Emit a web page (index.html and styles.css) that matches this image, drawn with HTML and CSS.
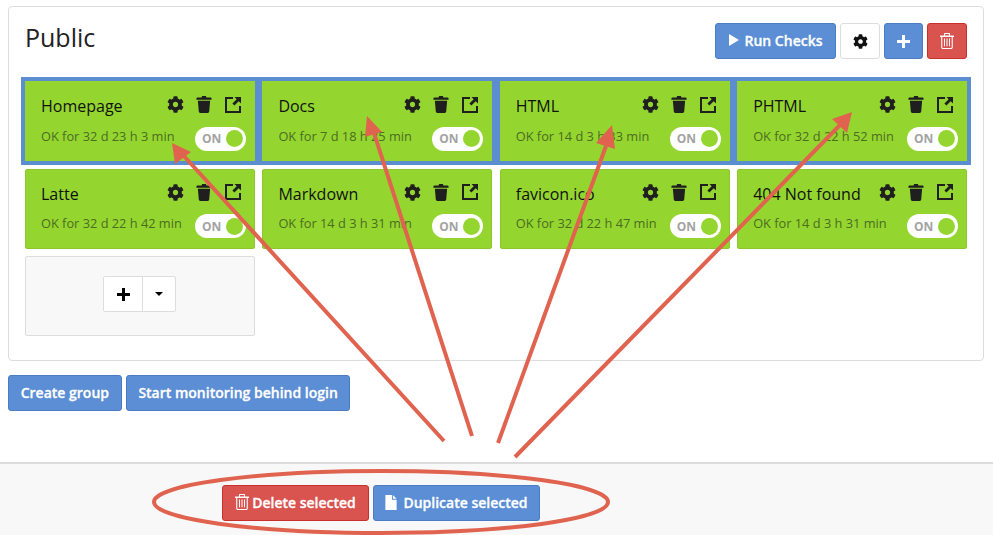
FILE: index.html
```html
<!DOCTYPE html>
<html>
<head>
    <title>Public checks</title>
    <link rel="stylesheet" href="styles.css">
</head>
<body>
    <svg class="icon-defs" width="0" height="0">
        <symbol id="i-gear" viewBox="0 0 512 512">
            <path d="M487.4 315.7l-42.6-24.6c4.3-23.2 4.3-47 0-70.2l42.6-24.6c4.9-2.8 7.1-8.6 5.5-14-11.1-35.6-30-67.8-54.7-94.6-3.8-4.1-10-5.1-14.8-2.3L380.8 110c-17.9-15.4-38.5-27.3-60.8-35.1V25.8c0-5.6-3.9-10.5-9.4-11.7-36.7-8.2-74.3-7.8-109.2 0-5.5 1.2-9.4 6.1-9.4 11.7V75c-22.2 7.9-42.8 19.8-60.8 35.1L88.7 85.5c-4.9-2.8-11-1.9-14.8 2.3-24.7 26.7-43.6 58.9-54.7 94.6-1.7 5.4.6 11.2 5.5 14L67.3 221c-4.3 23.2-4.3 47 0 70.2l-42.6 24.6c-4.9 2.8-7.1 8.6-5.5 14 11.1 35.6 30 67.8 54.7 94.6 3.8 4.1 10 5.1 14.8 2.3l42.6-24.6c17.9 15.4 38.5 27.3 60.8 35.1v49.2c0 5.6 3.9 10.5 9.4 11.7 36.7 8.2 74.3 7.8 109.2 0 5.5-1.2 9.4-6.1 9.4-11.7v-49.2c22.2-7.9 42.8-19.8 60.8-35.1l42.6 24.6c4.9 2.8 11 1.9 14.8-2.3 24.7-26.7 43.6-58.9 54.7-94.6 1.5-5.5-.7-11.3-5.6-14.1zM256 336c-44.1 0-80-35.9-80-80s35.9-80 80-80 80 35.9 80 80-35.9 80-80 80z"/>
        </symbol>
        <symbol id="i-bin" viewBox="0 0 16 18">
            <path d="M6 0h4l.6 1.500H15c.6 0 1 .4 1 1V4H0V2.500c0-.6.4-1 1-1h4.400z"/>
            <path d="M1.500 5h13l-1 11.500c-.1.900-.7 1.500-1.600 1.500H4.100c-.9 0-1.500-.6-1.600-1.500z"/>
        </symbol>
        <symbol id="i-open" viewBox="0 0 16 16">
            <path d="M0 0h8v2H2v12h12V9h2v7H0z"/>
            <path d="M9.500 0H16v6.500l-2.300-2.300-4.300 4.300-2-2 4.300-4.300z"/>
        </symbol>
        <symbol id="i-trash-line" viewBox="0 0 14 16">
            <path fill-rule="evenodd" d="M5 0h4c.6 0 1 .4 1 1v1.500h3.500c.3 0 .5.200.5.500v1h-1.200v10.200c0 1-.7 1.800-1.600 1.800H2.800c-.9 0-1.600-.8-1.600-1.800V4H0V3c0-.3.200-.5.500-.5H4V1c0-.6.400-1 1-1zm0 1v1.500h4V1zM2.300 4v10.200c0 .5.300.7.500.7h8.400c.2 0 .5-.2.500-.7V4zM4 5.500h1v7.800H4zm2.500 0h1v7.800h-1zm2.500 0h1v7.800H9z"/>
        </symbol>
        <symbol id="i-file" viewBox="0 0 12 16">
            <path d="M0 0h7v5h5v11H0zM8 0l4 4H8z"/>
        </symbol>
    </svg>

    <div class="page">
        <div class="panel">
            <div class="panel-head">
                <h2>Public</h2>
                <div class="head-btns">
                    <button class="btn btn-blue btn-run"><span class="play"></span>Run Checks</button>
                    <button class="btn btn-white btn-square"><svg class="ico-15"><use href="#i-gear"/></svg></button>
                    <button class="btn btn-blue btn-square btn-add"><span class="plus plus-white"></span></button>
                    <button class="btn btn-red btn-square"><svg class="ico-trash"><use href="#i-trash-line"/></svg></button>
                </div>
            </div>

            <div class="grid">
                <div class="card selected">
                    <div class="card-top"><span class="name">Homepage</span><span class="tools"><svg class="t-gear"><use href="#i-gear"/></svg><svg class="t-bin"><use href="#i-bin"/></svg><svg class="t-open"><use href="#i-open"/></svg></span></div>
                    <div class="card-bottom"><span class="status">OK for 32 d 23 h 3 min</span><span class="toggle">ON<i></i></span></div>
                </div>
                <div class="card selected">
                    <div class="card-top"><span class="name">Docs</span><span class="tools"><svg class="t-gear"><use href="#i-gear"/></svg><svg class="t-bin"><use href="#i-bin"/></svg><svg class="t-open"><use href="#i-open"/></svg></span></div>
                    <div class="card-bottom"><span class="status">OK for 7 d 18 h 25 min</span><span class="toggle">ON<i></i></span></div>
                </div>
                <div class="card selected">
                    <div class="card-top"><span class="name">HTML</span><span class="tools"><svg class="t-gear"><use href="#i-gear"/></svg><svg class="t-bin"><use href="#i-bin"/></svg><svg class="t-open"><use href="#i-open"/></svg></span></div>
                    <div class="card-bottom"><span class="status">OK for 14 d 3 h 33 min</span><span class="toggle">ON<i></i></span></div>
                </div>
                <div class="card selected">
                    <div class="card-top"><span class="name">PHTML</span><span class="tools"><svg class="t-gear"><use href="#i-gear"/></svg><svg class="t-bin"><use href="#i-bin"/></svg><svg class="t-open"><use href="#i-open"/></svg></span></div>
                    <div class="card-bottom"><span class="status">OK for 32 d 22 h 52 min</span><span class="toggle">ON<i></i></span></div>
                </div>
                <div class="card">
                    <div class="card-top"><span class="name">Latte</span><span class="tools"><svg class="t-gear"><use href="#i-gear"/></svg><svg class="t-bin"><use href="#i-bin"/></svg><svg class="t-open"><use href="#i-open"/></svg></span></div>
                    <div class="card-bottom"><span class="status">OK for 32 d 22 h 42 min</span><span class="toggle">ON<i></i></span></div>
                </div>
                <div class="card">
                    <div class="card-top"><span class="name">Markdown</span><span class="tools"><svg class="t-gear"><use href="#i-gear"/></svg><svg class="t-bin"><use href="#i-bin"/></svg><svg class="t-open"><use href="#i-open"/></svg></span></div>
                    <div class="card-bottom"><span class="status">OK for 14 d 3 h 31 min</span><span class="toggle">ON<i></i></span></div>
                </div>
                <div class="card">
                    <div class="card-top"><span class="name">favicon.ico</span><span class="tools"><svg class="t-gear"><use href="#i-gear"/></svg><svg class="t-bin"><use href="#i-bin"/></svg><svg class="t-open"><use href="#i-open"/></svg></span></div>
                    <div class="card-bottom"><span class="status">OK for 32 d 22 h 47 min</span><span class="toggle">ON<i></i></span></div>
                </div>
                <div class="card">
                    <div class="card-top"><span class="name">404 Not found</span><span class="tools"><svg class="t-gear"><use href="#i-gear"/></svg><svg class="t-bin"><use href="#i-bin"/></svg><svg class="t-open"><use href="#i-open"/></svg></span></div>
                    <div class="card-bottom"><span class="status">OK for 14 d 3 h 31 min</span><span class="toggle">ON<i></i></span></div>
                </div>
                <div class="add-card">
                    <div class="split">
                        <button class="split-main"><span class="plus plus-black"></span></button>
                        <button class="split-caret"><span class="caret"></span></button>
                    </div>
                </div>
            </div>
        </div>

        <div class="actions">
            <button class="btn btn-blue btn-text">Create group</button>
            <button class="btn btn-blue btn-text">Start monitoring behind login</button>
        </div>
    </div>

    <div class="footer">
        <button class="btn btn-red btn-delete"><svg class="ico-trash"><use href="#i-trash-line"/></svg>Delete selected</button>
        <button class="btn btn-blue btn-duplicate"><svg class="ico-file"><use href="#i-file"/></svg>Duplicate selected</button>
    </div>

    <!-- red annotations drawn on top of the screenshot -->
    <svg class="notes" width="993" height="535" viewBox="0 0 993 535">
        <g stroke="#e0634f" stroke-width="4" fill="none">
            <line x1="444" y1="441" x2="183" y2="155"/>
            <line x1="472" y1="436" x2="373" y2="130"/>
            <line x1="498" y1="443" x2="606" y2="146"/>
            <line x1="515" y1="457" x2="840" y2="125"/>
            <ellipse cx="381" cy="502" rx="227" ry="31"/>
        </g>
        <g fill="#e0634f">
            <polygon points="172,143 191,152 175,164"/>
            <polygon points="367,116 382,132 365,137"/>
            <polygon points="612,125 615,149 596,143"/>
            <polygon points="852,112 847,133 832,119"/>
        </g>
    </svg>
</body>
</html>
```

FILE: styles.css
```css
* {
    box-sizing: border-box;
}

html, body {
    height: 100%;
}

body {
    margin: 0;
    height: 535px;
    overflow: hidden;
    display: flex;
    flex-direction: column;
    font-family: "Open Sans", sans-serif;
    background-color: #fff;
    color: #222;
}

.icon-defs {
    display: block;
    height: 0;
}

.page {
    padding: 6px 9px 0 8px;
}

.panel {
    height: 355px;
    padding: 16px 16px 0 16px;
    background-color: #fff;
    border: 1px solid #ddd;
    border-radius: 4px;
}

.panel-head {
    display: flex;
    justify-content: space-between;
    height: 58px;
}

.panel-head h2 {
    margin: -1px 0 0;
    font-size: 25px;
    font-weight: 500;
    line-height: 30px;
    color: #222;
}

.head-btns {
    display: flex;
    gap: 4px;
}

.btn {
    height: 36px;
    border: 1px solid;
    border-radius: 3px;
    font-family: "Open Sans", sans-serif;
    font-size: 14px;
    font-weight: 600;
    -webkit-text-stroke: 0.3px currentColor;
    color: #fff;
    padding: 0 0 2px;
    display: inline-flex;
    align-items: center;
    justify-content: center;
}

.btn-blue {
    background-color: #5b8ed4;
    border-color: #4a7cc5;
}

.btn-red {
    background-color: #d9534f;
    border-color: #c9302c;
}

.btn-white {
    background-color: #fff;
    border-color: #ddd;
    color: #111;
}

.btn-run {
    width: 121px;
    gap: 6px;
}

.btn-square {
    width: 40px;
    padding: 0;
}

.btn-add {
    width: 39px;
}

.btn-text {
    padding: 0 11.7px 2px;
}

.play {
    width: 0;
    height: 0;
    border-left: 10px solid #fff;
    border-top: 6px solid transparent;
    border-bottom: 6px solid transparent;
}

.plus {
    display: block;
    width: 13px;
    height: 13px;
}

.plus-white {
    background: linear-gradient(#fff, #fff) center / 13px 3px no-repeat,
                linear-gradient(#fff, #fff) center / 3px 13px no-repeat;
}

.plus-black {
    background: linear-gradient(#000, #000) center / 13px 3px no-repeat,
                linear-gradient(#000, #000) center / 3px 13px no-repeat;
}

.ico-15 {
    width: 15px;
    height: 15px;
    fill: currentColor;
}

.ico-trash {
    width: 14px;
    height: 16px;
    fill: currentColor;
    stroke: none;
}

.ico-file {
    width: 12px;
    height: 15px;
    fill: currentColor;
}

.grid {
    display: grid;
    grid-template-columns: repeat(4, 1fr);
    grid-auto-rows: 80px;
    column-gap: 7.5px;
    row-gap: 7.6px;
}

.card {
    padding: 13px 8px 0 15px;
    background-color: #94d62f;
    border: 1px solid #8cc82c;
    border-radius: 2px;
}

.card.selected {
    border-color: #94d62f;
    border-radius: 0;
    outline: 4px solid #5b8ed1;
}

.card-top {
    display: flex;
    justify-content: space-between;
    align-items: center;
    height: 22px;
    padding-right: 5px;
}

.name {
    font-size: 16px;
    color: #111;
}

.tools {
    display: flex;
    align-items: center;
    margin-top: -3px;
    fill: #1f1f1f;
}

.t-gear {
    width: 17px;
    height: 17px;
    margin-right: 12px;
}

.t-bin {
    width: 16px;
    height: 17px;
    margin-right: 13px;
}

.t-open {
    width: 16px;
    height: 16px;
}

.card-bottom {
    display: flex;
    justify-content: space-between;
    align-items: center;
    height: 24px;
    margin-top: 9px;
}

.status {
    font-size: 12.8px;
    color: #4c6c22;
    margin-top: -5px;
    white-space: nowrap;
}

.toggle {
    display: flex;
    align-items: center;
    justify-content: space-between;
    width: 51px;
    height: 24px;
    margin-top: 1px;
    padding: 0 3px 0 7px;
    background-color: #fff;
    border-radius: 12px;
    font-size: 12px;
    font-weight: 700;
    color: #a3a3a3;
}

.toggle i {
    display: block;
    width: 17px;
    height: 17px;
    border-radius: 50%;
    background-color: #94d62f;
}

.add-card {
    display: flex;
    align-items: center;
    justify-content: center;
    padding-bottom: 4px;
    background-color: #f8f8f8;
    border: 1px solid #ddd;
    border-radius: 2px;
}

.split {
    display: flex;
}

.split button {
    height: 36px;
    padding: 0;
    background-color: #fff;
    border: 1px solid #ddd;
    display: flex;
    align-items: center;
    justify-content: center;
}

.split-main {
    width: 40px;
    border-radius: 2px 0 0 2px;
}

.split-caret {
    width: 34px;
    margin-left: -1px;
    border-radius: 0 2px 2px 0;
}

.caret {
    width: 0;
    height: 0;
    border-top: 4px solid #000;
    border-left: 4px solid transparent;
    border-right: 4px solid transparent;
}

.actions {
    display: flex;
    gap: 4px;
    margin-top: 14px;
}

.footer {
    margin-top: auto;
    height: 73px;
    padding: 21px 0 0 222px;
    display: flex;
    gap: 4px;
    background-color: #f8f8f8;
    border-top: 2px solid #dcdcdc;
}

.btn-delete {
    width: 147px;
    gap: 3px;
}

.btn-duplicate {
    width: 167px;
    gap: 6px;
}

.notes {
    position: absolute;
    left: 0;
    top: 0;
    pointer-events: none;
}
```
